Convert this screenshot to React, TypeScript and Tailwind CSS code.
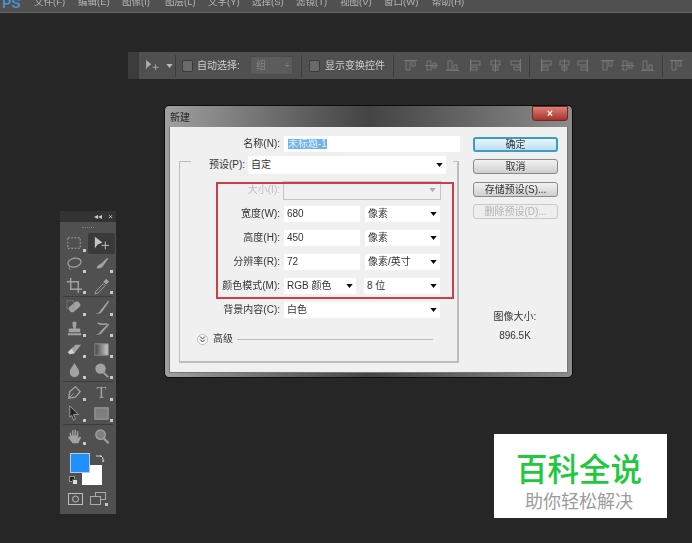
import React from "react";

const CJK = "font-['Liberation_Sans','Noto_Sans_CJK_SC',sans-serif]";

const menus = [
  ["文件(F)", "w-[44px]"],
  ["编辑(E)", "w-[44px]"],
  ["图像(I)", "w-[43px]"],
  ["图层(L)", "w-[43px]"],
  ["文字(Y)", "w-[44px]"],
  ["选择(S)", "w-[44px]"],
  ["滤镜(T)", "w-[44px]"],
  ["视图(V)", "w-[44px]"],
  ["窗口(W)", "w-[48px]"],
  ["帮助(H)", "w-[44px]"],
];

function Arrow({ color = "#111" }: { color?: string }) {
  return (
    <svg width="7" height="4" viewBox="0 0 8 5" className="shrink-0">
      <polygon points="0,0 8,0 4,5" fill={color} />
    </svg>
  );
}

function AlignIcon({ kind }: { kind: number }) {
  const c = "#767676";
  const shapes = [
    <><rect x="2" y="2" width="4" height="9" fill="none" stroke={c} /><rect x="8" y="2" width="3" height="5" fill="none" stroke={c} /><line x1="0" x2="13" y1="1.5" y2="1.5" stroke={c} /></>,
    <><rect x="2" y="2" width="4" height="9" fill="none" stroke={c} /><rect x="8" y="4" width="3" height="5" fill="none" stroke={c} /><line x1="0" x2="13" y1="6.5" y2="6.5" stroke={c} /></>,
    <><rect x="2" y="2" width="4" height="9" fill="none" stroke={c} /><rect x="8" y="6" width="3" height="5" fill="none" stroke={c} /><line x1="0" x2="13" y1="11.5" y2="11.5" stroke={c} /></>,
    <><rect x="2" y="2" width="9" height="4" fill="none" stroke={c} /><rect x="2" y="8" width="6" height="3" fill="none" stroke={c} /><line x1="1.5" x2="1.5" y1="0" y2="13" stroke={c} /></>,
    <><rect x="2" y="2" width="9" height="4" fill="none" stroke={c} /><rect x="4" y="8" width="5" height="3" fill="none" stroke={c} /><line x1="6.5" x2="6.5" y1="0" y2="13" stroke={c} /></>,
    <><rect x="2" y="2" width="9" height="4" fill="none" stroke={c} /><rect x="5" y="8" width="6" height="3" fill="none" stroke={c} /><line x1="11.5" x2="11.5" y1="0" y2="13" stroke={c} /></>,
  ];
  return (
    <svg width="13" height="13" viewBox="0 0 13 13" className="shrink-0">
      {shapes[kind]}
    </svg>
  );
}

function Sep() {
  return <div className="h-[22px] w-px bg-[#3d3d3d] shrink-0" />;
}

function Check() {
  return <div className="w-[11px] h-[12px] rounded-[2px] bg-[#6a6a6a] border border-[#3a3a3a] shrink-0" />;
}

function Optionbar() {
  return (
    <div className={`absolute left-[128px] top-[52px] w-[564px] h-[27px] flex bg-[#505050] blur-[0.5px] ${CJK}`}>
      <div className="w-[11px] h-full bg-[#3c3c3c] shrink-0" />
      <div className="flex items-center h-full text-[10px] text-[#cfcfcf] whitespace-nowrap">
        <svg width="14" height="12" viewBox="0 0 16 14" className="ml-[7px] shrink-0">
          <polygon points="0,0 6,5 2,8 0,11" fill="#b0b0b0" />
          <path d="M11 5v7M7.5 8.500h7" stroke="#b0b0b0" fill="none" />
        </svg>
        <div className="ml-[6px]"><Arrow color="#b8b8b8" /></div>
        <div className="ml-[2px]"><Sep /></div>
        <div className="ml-[6px]"><Check /></div>
        <span className="ml-[4px] w-[53px]">自动选择:</span>
        <div className="w-[43px] h-[19px] bg-[#5c5c5c] border border-[#4c4c4c] flex items-center justify-between pl-[5px] pr-[3px] text-[#858585]">
          <span>组</span>
          <span className="text-[7px] leading-[7px] text-[#aaa]">÷</span>
        </div>
        <div className="ml-[8px]"><Sep /></div>
        <div className="ml-[7px]"><Check /></div>
        <span className="ml-[5px] w-[62px]">显示变换控件</span>
        <div className="ml-[6px]"><Sep /></div>
        <div className="ml-[10px] flex gap-[8px]">
          <AlignIcon kind={0} /><AlignIcon kind={1} /><AlignIcon kind={2} />
        </div>
        <div className="ml-[10px] flex gap-[7px]">
          <AlignIcon kind={3} /><AlignIcon kind={4} /><AlignIcon kind={5} />
        </div>
        <div className="ml-[7px]"><Sep /></div>
        <div className="ml-[10px] flex gap-[5px]">
          <AlignIcon kind={3} /><AlignIcon kind={4} /><AlignIcon kind={5} />
        </div>
        <div className="ml-[12px] flex gap-[7px]">
          <AlignIcon kind={0} /><AlignIcon kind={1} /><AlignIcon kind={2} />
        </div>
        <div className="ml-[8px]"><Sep /></div>
        <div className="ml-[7px]"><AlignIcon kind={0} /></div>
      </div>
    </div>
  );
}

function Field({ children, className = "" }: { children?: React.ReactNode; className?: string }) {
  return (
    <div className={`h-[16px] bg-white flex items-center justify-between pl-[3px] pr-[3px] text-[#333] text-[10px] leading-none whitespace-nowrap ${className}`}>
      {children}
    </div>
  );
}

function Sel({ text, className = "" }: { text: string; className?: string }) {
  return (
    <Field className={className}>
      <span>{text}</span>
      <Arrow />
    </Field>
  );
}

function Row({ label, children, dim = false }: { label: string; children: React.ReactNode; dim?: boolean }) {
  return (
    <div className="h-[24px] flex items-center">
      <div className={`w-[100px] text-right text-[10px] leading-none whitespace-nowrap ${dim ? "text-[#bdbdbd]" : "text-[#333]"}`}>{label}</div>
      <div className="ml-[4px] flex gap-[5px]">{children}</div>
    </div>
  );
}

function Btn({ text, kind = "normal" }: { text: string; kind?: "normal" | "primary" | "off" }) {
  const cls =
    kind === "primary"
      ? "border-[#3c9cc8] bg-gradient-to-b from-[#e8f6fc] to-[#bfe0f0] text-[#333] border-2"
      : kind === "off"
      ? "border-[#c8c8c8] bg-[#eeeeee] text-[#b4b4b4] border"
      : "border-[#8a8a8a] bg-gradient-to-b from-[#f2f2f2] to-[#cfcfcf] text-[#333] border";
  return (
    <div className={`w-[85px] h-[15px] rounded-[3px] flex items-center justify-center text-[10px] leading-none whitespace-nowrap ${cls}`}>
      {text}
    </div>
  );
}

function Dialog() {
  return (
    <div className={`absolute left-[164px] top-[105px] w-[409px] h-[273px] rounded-[5px] border border-[#0d0d0d] bg-gradient-to-r from-[#a0a0a0] via-[#444444] to-[#8c8c8c] flex flex-col px-[4px] pb-[4px] blur-[0.4px] ${CJK}`}>
      <div className="h-[21px] shrink-0 flex items-center justify-between">
        <span className="ml-[1px] mt-[1px] text-[10px] text-[#222]">新建</span>
        <div className="w-[36px] h-[15px] -mt-[6px] rounded-b-[3px] bg-gradient-to-b from-[#d98078] to-[#a8302a] border border-[#6b2a28] flex items-center justify-center text-white text-[10px] leading-none font-bold">
          ×
        </div>
      </div>
      <div className="flex-1 bg-[#f0f0f0] border border-[#777] border-t-0 flex justify-between">
        <div className="w-[293px] pt-[9px] flex flex-col">
          <div className="h-[16px] flex items-center">
            <div className="w-[110px] text-right text-[10px] leading-none text-[#333]">名称(N):</div>
            <Field className="ml-[4px] w-[176px] !justify-start">
              <span className="bg-[#6fb3ea] text-[#dff0ff] ml-[1px]">未标题-1</span>
            </Field>
          </div>
          <div className="relative ml-[9px] mt-[9px] w-[280px] h-[202px] border border-[#bdbdbd] border-r-2 border-b-2 flex flex-col">
            <div className="ml-[11px] -mt-[6px] w-[262px] h-[18px] bg-[#f0f0f0] flex items-center">
              <div className="w-[54px] text-right text-[10px] leading-none text-[#333]">预设(P):</div>
              <Sel text="自定" className="ml-[3px] w-[198px] h-[18px]" />
            </div>
            <div className="mt-[4px]">
              <Row label="大小(I):" dim>
                <div className="w-[158px] h-[19px] border border-[#c4c4c4] bg-[#f0f0f0] -ml-[1px] flex items-center justify-end pr-[4px]">
                  <Arrow color="#aaa" />
                </div>
              </Row>
              <Row label="宽度(W):">
                <Field className="w-[76px]">680</Field>
                <Sel text="像素" className="w-[75px]" />
              </Row>
              <Row label="高度(H):">
                <Field className="w-[76px]">450</Field>
                <Sel text="像素" className="w-[75px]" />
              </Row>
              <Row label="分辨率(R):">
                <Field className="w-[76px]">72</Field>
                <Sel text="像素/英寸" className="w-[75px]" />
              </Row>
              <Row label="颜色模式(M):">
                <Sel text="RGB 颜色" className="w-[72px]" />
                <Sel text="8 位" className="ml-[3px] w-[76px]" />
              </Row>
              <Row label="背景内容(C):">
                <Sel text="白色" className="w-[156px]" />
              </Row>
            </div>
            <div className="mt-[7px] h-[20px] ml-[17px] flex items-center">
              <div className="w-[11px] h-[11px] rounded-full bg-white border border-[#bbb] flex items-center justify-center">
                <svg width="7" height="7" viewBox="0 0 7 7">
                  <path d="M1 0.500l2.500 2.500 2.500-2.500M1 3.500l2.500 2.500 2.500-2.500" stroke="#333" fill="none" />
                </svg>
              </div>
              <span className="ml-[5px] text-[10px] leading-none text-[#333]">高级</span>
              <div className="ml-[4px] w-[196px] h-px bg-[#bdbdbd]" />
            </div>
            <div className="absolute left-[36px] top-[20px] w-[238px] h-[117px] border-2 border-[#cf3d4c]" />
          </div>
        </div>
        <div className="w-[85px] mr-[9px] pt-[10px] flex flex-col">
          <Btn text="确定" kind="primary" />
          <div className="mt-[7px]"><Btn text="取消" /></div>
          <div className="mt-[8px]"><Btn text="存储预设(S)..." /></div>
          <div className="mt-[7px]"><Btn text="删除预设(D)..." kind="off" /></div>
          <div className="mt-[93px] ml-[-1px] text-center text-[10px] leading-none text-[#333]">图像大小:</div>
          <div className="mt-[9px] ml-[-1px] text-center text-[10px] leading-none text-[#333]">896.5K</div>
        </div>
      </div>
    </div>
  );
}

const ic = "#a2a2a2";
const icons: Record<string, React.ReactNode> = {
  marquee: <rect x="3" y="4" width="13" height="11" fill="none" stroke={ic} strokeDasharray="2 1.500" />,
  move: <><polygon points="3,3 11,9 6,11 3,15" fill="#c4c4c4" /><path d="M14 8v8M10 12h8" stroke="#c4c4c4" fill="none" /></>,
  lasso: <><ellipse cx="10" cy="8" rx="7" ry="4.500" fill="none" stroke={ic} strokeWidth="1.300" transform="rotate(-12 10 8)" /><path d="M5 12c-1 2 0 3 1 4" stroke={ic} fill="none" /></>,
  quick: <><path d="M5 14c0-3 3-4 5-5l6-6 1 1-5 7c-1 2-4 4-7 3z" fill={ic} /></>,
  crop: <path d="M6 2v12h12M2 6h12v12" stroke={ic} strokeWidth="1.500" fill="none" />,
  dropper: <><path d="M4 16l8-8 2 2-8 8-3 1z" fill="none" stroke={ic} /><path d="M12 6l3-3 3 3-3 3z" fill={ic} /></>,
  heal: <><rect x="4" y="6" width="13" height="7" rx="3" fill={ic} transform="rotate(-40 10 10)" /><rect x="2" y="3" width="7" height="8" fill="none" stroke="#888" strokeDasharray="1.500 1" /></>,
  brush: <path d="M3 16c3 1 5-1 6-3l8-10 1 1-7 10c-2 3-5 3-8 2z" fill={ic} />,
  stamp: <path d="M8 3h4v4l-1 3h5v4H4v-4h5L8 7zM3 15h14v2H3z" fill={ic} />,
  history: <><path d="M3 16c3 1 5-1 6-3l8-8 1 1-7 8c-2 3-5 3-8 2z" fill={ic} /><path d="M6 4c3 2 6 2 10 1" stroke={ic} strokeWidth="1.500" fill="none" /></>,
  eraser: <><polygon points="3,13 11,5 17,5 10,14 5,15" fill={ic} /><polygon points="3,13 7,9 10,14 5,15" fill="#d0d0d0" /></>,
  gradient: <><defs><linearGradient id="g1" x1="0" x2="1"><stop offset="0" stopColor="#444" /><stop offset="1" stopColor="#ccc" /></linearGradient></defs><rect x="3" y="4" width="14" height="12" fill="url(#g1)" stroke="#8a8a8a" /></>,
  blur: <path d="M10 2c2 4 5 6 5 10a5 5 0 0 1-10 0c0-4 3-6 5-10z" fill={ic} />,
  dodge: <><circle cx="9" cy="8" r="5.500" fill={ic} /><path d="M12 12l5 5" stroke={ic} strokeWidth="2" /></>,
  pen: <><path d="M4 16l1-7 6-5 5 5-5 6z" fill="none" stroke={ic} strokeWidth="1.400" /><path d="M4 16l5-5" stroke={ic} /></>,
  text: <text x="10" y="16" textAnchor="middle" fontSize="17" fontFamily="Liberation Serif, serif" fill={ic}>T</text>,
  path: <polygon points="5,2 14,11 9,11 11,16 9,17 7,12 5,14" fill="#222" stroke={ic} />,
  shape: <rect x="3" y="4" width="14" height="12" fill="#7e7e7e" stroke={ic} />,
  hand: <path d="M5 10V6h1.500v3h1V3.500H9V9h1V3h1.500v6h1V4.500H14V12l1.500-2 1.500 1-3 6H8l-4-5-1-2 2 .5z" fill={ic} />,
  zoom: <><circle cx="9" cy="8" r="5" fill="#808080" stroke={ic} strokeWidth="1.300" /><path d="M12.500 12l5 5" stroke={ic} strokeWidth="2.200" /></>,
};

function Tool({ name, active = false, corner = true }: { name: string; active?: boolean; corner?: boolean }) {
  return (
    <div className={`relative h-[21px] w-[27px] flex items-center justify-center ${active ? "bg-[#3a3a3a] rounded-[2px]" : ""}`}>
      <svg width="19" height="19" viewBox="0 0 20 20">{icons[name]}</svg>
      {corner && <div className="absolute right-[2px] bottom-[2px] w-[3px] h-[3px] bg-[#c8c8c8]" />}
    </div>
  );
}

function ToolRow({ a, b, activeB = false, cornerB = true }: { a: string; b: string; activeB?: boolean; cornerB?: boolean }) {
  return (
    <div className="flex justify-center gap-0">
      <Tool name={a} />
      <Tool name={b} active={activeB} corner={cornerB} />
    </div>
  );
}

function Divider() {
  return <div className="h-px bg-[#3c3c3c] mx-[3px]" />;
}

function Toolbox() {
  return (
    <div className="absolute left-[60px] top-[211px] w-[56px] h-[303px] bg-[#505050] flex flex-col blur-[0.5px]">
      <div className="h-[11px] bg-[#333333] flex items-center justify-end gap-[6px] pr-[3px] text-[#c8c8c8] text-[8px] leading-none font-['Liberation_Sans',sans-serif]">
        <span>◂◂</span>
        <span>×</span>
      </div>
      <div className="h-[11px] flex items-center justify-center">
        <div className="w-[12px] h-[2px] border-t border-dotted border-[#808080]" />
      </div>
      <ToolRow a="marquee" b="move" activeB cornerB={false} />
      <ToolRow a="lasso" b="quick" />
      <ToolRow a="crop" b="dropper" />
      <Divider />
      <ToolRow a="heal" b="brush" />
      <ToolRow a="stamp" b="history" />
      <ToolRow a="eraser" b="gradient" />
      <ToolRow a="blur" b="dodge" />
      <Divider />
      <ToolRow a="pen" b="text" />
      <ToolRow a="path" b="shape" />
      <Divider />
      <div className="pt-[1px]">
        <ToolRow a="hand" b="zoom" cornerB={false} />
      </div>
      <div className="relative h-[38px] shrink-0 mt-[3px]">
        <div className="absolute left-[22px] top-[15px] w-[20px] h-[20px] bg-white" />
        <div className="absolute left-[10px] top-[3px] w-[20px] h-[20px] bg-[#1e90ff] border border-[#bcd]" />
        <svg width="10" height="10" viewBox="0 0 10 10" className="absolute left-[35px] top-[4px]">
          <path d="M1 2h5l2 2v4M6 1l-1 2M9 6L8 8" stroke="#ccc" fill="none" />
        </svg>
        <div className="absolute left-[9px] top-[26px] w-[6px] h-[6px] bg-[#222] border border-[#999]" />
        <div className="absolute left-[12px] top-[29px] w-[6px] h-[6px] bg-[#ddd] border border-[#555]" />
      </div>
      <div className="flex justify-center items-center gap-[7px] mt-[4px]">
        <svg width="15" height="12" viewBox="0 0 15 12">
          <rect x="0.500" y="0.500" width="14" height="11" fill="none" stroke="#bcbcbc" />
          <circle cx="7.500" cy="6" r="3" fill="none" stroke="#bcbcbc" />
        </svg>
        <svg width="18" height="14" viewBox="0 0 18 14">
          <rect x="5.500" y="0.500" width="10" height="7" fill="#505050" stroke="#aaa" />
          <rect x="0.500" y="4.500" width="10" height="8" fill="#505050" stroke="#aaa" />
          <rect x="15" y="11" width="3" height="3" fill="#c8c8c8" />
        </svg>
      </div>
    </div>
  );
}

function Logo() {
  return (
    <div className="absolute left-[494px] top-[434px] w-[173px] h-[84px] bg-white flex flex-col items-center pr-[3px] font-['Noto_Sans_CJK_SC',sans-serif]">
      <div className="mt-[18px] text-[31.500px] leading-none font-medium text-[#1fc93d] whitespace-nowrap">百科全说</div>
      <div className="mt-[7px] text-[18px] leading-none text-[#9c9c9c] whitespace-nowrap">助你轻松解决</div>
    </div>
  );
}

export default function App() {
  return (
    <div className="relative w-[692px] h-[543px] overflow-hidden bg-[#262626]">
      <div className={`h-[13px] bg-[#505050] border-b border-[#666] overflow-hidden flex items-center blur-[0.5px] ${CJK}`}>
        <span className="ml-[2px] w-[32px] -mt-[7px] text-[14px] font-bold leading-none text-[#4a90d4]">PS</span>
        {menus.map(([m, w]) => (
          <span key={m} className={`${w} -mt-[8px] shrink-0 text-[9.500px] leading-none text-[#b4b4b4] whitespace-nowrap`}>{m}</span>
        ))}
      </div>
      <Optionbar />
      <Dialog />
      <Toolbox />
      <Logo />
    </div>
  );
}
